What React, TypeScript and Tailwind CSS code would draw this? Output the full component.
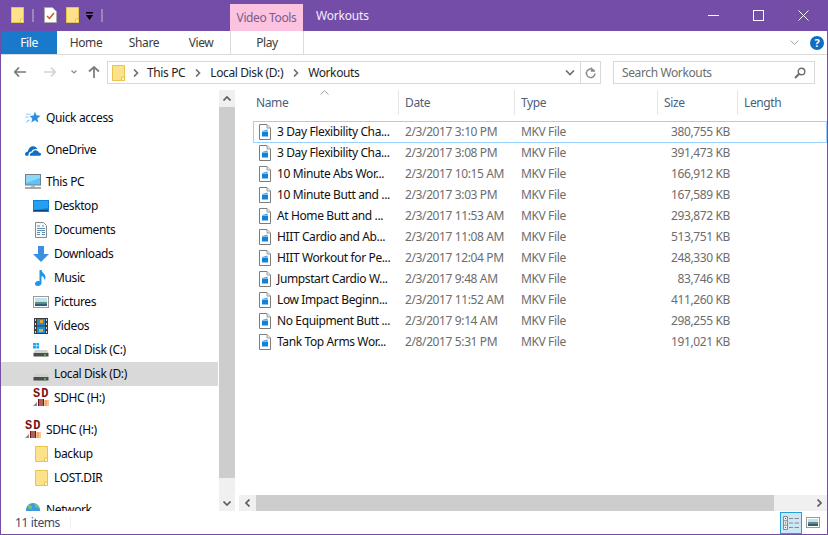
import React from "react";

const Folder = ({ className = "" }: { className?: string }) => (
  <svg width="13" height="16" viewBox="0 0 13 16" className={className}>
    <path d="M.5.5h12v15H.5z" fill="#fde38a" stroke="#e9c34f" />
    <path d="M1 1h11v14H1z" fill="#fde28c" />
    <path d="M9.500 15.500v-3.500h3v3.500z" fill="#fff3c4" stroke="#e9c34f" />
  </svg>
);

const Chevron = () => (
  <svg width="6" height="8" viewBox="0 0 6 8" className="shrink-0">
    <path d="M1 0.5 4.500 4 1 7.500" fill="none" stroke="#6d6d6d" strokeWidth="1.600" />
  </svg>
);

const FileIcon = () => (
  <svg width="12" height="16" viewBox="0 0 12 16" className="shrink-0">
    <path d="M.5.5h7.500l3.500 3.500v11.500H.5z" fill="#fff" stroke="#7c7c7c" />
    <path d="M8 .5v3.500h3.500" fill="#eee" stroke="#9a9a9a" />
    <path d="M3 7l5.500-1.500V7H3z" fill="#4aa3ea" />
    <rect x="3" y="7.500" width="6" height="5" fill="#0f83dc" />
  </svg>
);

const Star = () => (
  <svg width="17" height="16" viewBox="0 0 17 16">
    <path d="M10.500 1l1.600 4.200 4.400.3-3.400 2.900 1.100 4.400-3.700-2.400-3.800 2.400 1.100-4.400-2.900-2.600 4.300-.5z" fill="#2b8fe0" />
    <path d="M1 4h5M0 7h4M2 10.500h3M1 13l3-2" stroke="#8cc6f2" strokeWidth="1" />
  </svg>
);
const Cloud = () => (
  <svg width="17" height="11" viewBox="0 0 17 11">
    <path d="M0 9.500C0 7.600 1.500 6.500 3 6.500 3.800 3 6 1 8.700 1c2 0 3.500 1 4.300 3-2.500-.5-5.500.5-6.500 3C5 6.500 4 7.500 3.500 11H1.500C.5 11 0 10.300 0 9.500z" fill="#0f6fc6" />
    <path d="M5 11c.2-2.500 1.700-3.500 3-3.500C9 5.500 11 5 12.500 5.500c1.500.5 2 1.500 2.200 2 1.300 0 2.300.9 2.300 1.900 0 1-.7 1.600-1.700 1.600z" fill="#0f6fc6" />
  </svg>
);
const Monitor = () => (
  <svg width="16" height="16" viewBox="0 0 16 16">
    <rect x=".5" y=".5" width="15" height="10.500" fill="#5fc1f5" stroke="#6f7f8c" />
    <path d="M1 1h14v3L1 9z" fill="#8fd8fa" />
    <rect x="6" y="11" width="4" height="2" fill="#b5b5b5" />
    <rect x="0" y="13" width="16" height="2" fill="#a9a9a9" />
  </svg>
);
const Desktop = () => (
  <svg width="16" height="12" viewBox="0 0 16 12">
    <rect width="16" height="12" fill="#0f7fdc" />
    <path d="M1 1h14v7L1 10z" fill="#23a0f2" />
    <rect x="1" y="10" width="14" height="1" fill="#0a3f78" />
  </svg>
);
const Docs = () => (
  <svg width="12" height="16" viewBox="0 0 12 16">
    <path d="M.5.500h8l3 3v12H.5z" fill="#f8f8f8" stroke="#8a8a8a" />
    <path d="M2 4h3M7 4h2M2 6.500h8M2 8.500h8M2 10.500h3M7 10.500h3M2 12.500h3M7 12.500h3" stroke="#5f8fb5" />
  </svg>
);
const Down = () => (
  <svg width="16" height="16" viewBox="0 0 16 16">
    <path d="M5 0h6v8h5l-8 8-8-8h5z" fill="#3a90e0" />
  </svg>
);
const Music = () => (
  <svg width="12" height="16" viewBox="0 0 12 16">
    <path d="M4.500 0h2c.5 3 4 3.500 4 7.500 0 1-.3 2-1 2.500.2-2-1.300-3.500-3-4V13c0 1.800-1.700 3-3.500 3C1.200 16 0 15 0 13.700c0-1.500 1.500-2.700 3.200-2.700.5 0 1 .1 1.300.3z" fill="#1e96ec" />
  </svg>
);
const Pictures = () => (
  <svg width="16" height="12" viewBox="0 0 16 12">
    <rect x=".5" y=".5" width="15" height="11" fill="#fff" stroke="#9a9a9a" />
    <rect x="2" y="2" width="12" height="4" fill="#bfe3f4" />
    <rect x="2" y="6" width="12" height="2" fill="#5f8f7c" />
    <rect x="2" y="8" width="12" height="2" fill="#2f5f78" />
  </svg>
);
const Videos = () => (
  <svg width="14" height="16" viewBox="0 0 14 16">
    <rect width="14" height="16" fill="#3b3b3b" />
    <path d="M1 1h1v2H1zM1 5h1v2H1zM1 9h1v2H1zM1 13h1v2H1zM12 1h1v2h-1zM12 5h1v2h-1zM12 9h1v2h-1zM12 13h1v2h-1z" fill="#ddd" />
    <rect x="3" y="1" width="8" height="6.500" fill="#2e88c9" />
    <rect x="6" y="2" width="3" height="3" fill="#e2a72c" />
    <rect x="3" y="8.500" width="8" height="6.500" fill="#1d8fd6" />
    <rect x="5" y="11" width="4" height="3" fill="#d9b03a" />
  </svg>
);
const Disk = ({ win = false }: { win?: boolean }) => (
  <svg width="16" height="14" viewBox="0 0 16 14">
    {win && <path d="M0 0h3v2.500H0zM3.500 0H6v2.500H3.500zM0 3h3v2.500H0zM3.500 3H6v2.500H3.500z" fill="#1ca7ee" />}
    <path d="M2 7h12l1.500 3H.5z" fill="#cfcfcf" />
    <rect x=".5" y="10" width="15" height="3.500" fill="#4d4d4d" />
    <rect x="11" y="11" width="2" height="1.500" fill="#38d04a" />
  </svg>
);
const Sd = () => (
  <span className="relative block w-[16px] h-[18px]">
    <span className="absolute left-0 top-0 text-[12px] leading-[10px] font-bold text-[#7d1010] [font-family:'Liberation_Mono',monospace] tracking-[1px]">SD</span>
    <svg width="16" height="18" viewBox="0 0 16 18" className="absolute left-0 top-0">
      <rect x="5" y="10" width="6" height="7" fill="#7d1010" />
      <path d="M7 10v7M9 10v7" stroke="#d5b5a5" />
      <path d="M11 12h5M11 14h5M11 16h5M13 11v6" stroke="#f08a30" />
      <path d="M0 17l4-4v4z" fill="#8a8a8a" />
    </svg>
  </span>
);
const Globe = () => (
  <svg width="17" height="17" viewBox="0 0 17 17">
    <circle cx="8.500" cy="8" r="7.500" fill="#3d9be0" />
    <path d="M3 3c3-1 5 1 4 3S3 7 3 3zM10 1c3 1 5 3 5 5l-4-1z" fill="#7cc36c" />
  </svg>
);

const nav: { label: string; icon: React.ReactNode; sub?: boolean; gap?: boolean; sel?: boolean }[] = [
  { label: "Quick access", icon: <Star /> },
  { label: "OneDrive", icon: <Cloud />, gap: true },
  { label: "This PC", icon: <Monitor />, gap: true },
  { label: "Desktop", icon: <Desktop />, sub: true },
  { label: "Documents", icon: <Docs />, sub: true },
  { label: "Downloads", icon: <Down />, sub: true },
  { label: "Music", icon: <Music />, sub: true },
  { label: "Pictures", icon: <Pictures />, sub: true },
  { label: "Videos", icon: <Videos />, sub: true },
  { label: "Local Disk (C:)", icon: <Disk win />, sub: true },
  { label: "Local Disk (D:)", icon: <Disk />, sub: true, sel: true },
  { label: "SDHC (H:)", icon: <Sd />, sub: true },
  { label: "SDHC (H:)", icon: <Sd />, gap: true },
  { label: "backup", icon: <Folder />, sub: true },
  { label: "LOST.DIR", icon: <Folder />, sub: true },
  { label: "Network", icon: <Globe />, gap: true },
];

const files = [
  ["3 Day Flexibility Cha...", "2/3/2017 3:10 PM", "380,755 KB"],
  ["3 Day Flexibility Cha...", "2/3/2017 3:08 PM", "391,473 KB"],
  ["10 Minute Abs Wor...", "2/3/2017 10:15 AM", "166,912 KB"],
  ["10 Minute Butt and ...", "2/3/2017 3:03 PM", "167,589 KB"],
  ["At Home Butt and ...", "2/3/2017 11:53 AM", "293,872 KB"],
  ["HIIT Cardio and Ab...", "2/3/2017 11:08 AM", "513,751 KB"],
  ["HIIT Workout for Pe...", "2/3/2017 12:04 PM", "248,330 KB"],
  ["Jumpstart Cardio W...", "2/3/2017 9:48 AM", "83,746 KB"],
  ["Low Impact Beginn...", "2/3/2017 11:52 AM", "411,260 KB"],
  ["No Equipment Butt ...", "2/3/2017 9:14 AM", "298,255 KB"],
  ["Tank Top Arms Wor...", "2/8/2017 5:31 PM", "191,021 KB"],
];

const columns = [
  { label: "Name", w: "w-[160px]", pl: "pl-[17px]" },
  { label: "Date", w: "w-[116px]", pl: "pl-[6px]" },
  { label: "Type", w: "w-[143px]", pl: "pl-[6px]" },
  { label: "Size", w: "w-[80px]", pl: "pl-[6px]" },
  { label: "Length", w: "w-[80px]", pl: "pl-[6px]" },
];

export default function App() {
  return (
    <div className="w-[828px] h-[535px] overflow-hidden bg-[#744da9] pl-px pr-px pb-px flex flex-col text-[12px] leading-[16px] text-black [font-family:'Noto_Sans',sans-serif] tracking-[-0.38px]">
      {/* Title bar */}
      <div className="h-[31px] shrink-0 flex items-start text-white relative">
        <div className="w-[229px] shrink-0 flex items-center pt-[7px] pl-[10px]">
          <Folder />
          <div className="ml-[8px] w-[2px] h-[13px] bg-[#9c86bf]" />
          <svg width="13" height="16" viewBox="0 0 13 16" className="ml-[10px]">
            <path d="M.5.500h8l4 4v11H.5z" fill="#fff" stroke="#aaa" />
            <path d="M3 9l2.500 2.500L10 6" fill="none" stroke="#d9541e" strokeWidth="1.500" />
          </svg>
          <Folder className="ml-[9px]" />
          <svg width="7" height="8" viewBox="0 0 7 8" className="ml-[7px] mt-[2px]">
            <path d="M0 0h7v1.500H0zM0 3h7L3.500 8z" fill="#000" />
          </svg>
          <div className="ml-[8px] w-[2px] h-[13px] bg-[#9c86bf]" />
        </div>
        <div className="w-[73px] h-[27px] mt-[4px] shrink-0 bg-[#fbc3df] flex items-center justify-center text-[#7c5a8c] pt-[1px]">Video Tools</div>
        <div className="ml-[13px] mt-[8px] text-[#f3eef9] text-[12px] tracking-[-0.2px]">Workouts</div>
        <div className="ml-auto flex items-center pt-[10px] pr-[18px] gap-[34px]">
          <div className="w-[11px] h-[10px] flex items-center"><div className="w-[11px] h-px bg-white" /></div>
          <div className="w-[11px] h-[11px] border border-white" />
          <svg width="11" height="11" viewBox="0 0 11 11">
            <path d="M.5.500l10 10M10.500.500l-10 10" stroke="#fff" strokeWidth="1" />
          </svg>
        </div>
      </div>

      <div className="flex-1 min-h-0 bg-white flex flex-col">
        {/* Ribbon tabs */}
        <div className="h-[24px] shrink-0 flex items-stretch border-b border-[#dadbdc] text-[#3b3b3b]">
          <div className="w-[56px] h-[23px] bg-[#1979ca] text-white flex items-center justify-center">File</div>
          <div className="w-[58px] flex items-center justify-center">Home</div>
          <div className="w-[58px] flex items-center justify-center">Share</div>
          <div className="w-[56px] flex items-center justify-center">View</div>
          <div className="w-[74px] ml-px flex items-center justify-center border-x border-[#dadbdc]">Play</div>
          <div className="ml-auto flex items-center pr-[3px] gap-[11px]">
            <svg width="9" height="6" viewBox="0 0 9 6"><path d="M.5.500 4.500 4.500 8.500.500" fill="none" stroke="#a8a8a8" /></svg>
            <div className="w-[14px] h-[14px] rounded-full bg-[#0f6cc0] text-white font-bold text-[11px] leading-[14px] text-center">?</div>
          </div>
        </div>

        {/* Address row */}
        <div className="h-[35px] shrink-0 flex pt-[6px]">
          <div className="w-[106px] shrink-0 flex items-center h-[22px] pl-[13px]">
            <svg width="12" height="10" viewBox="0 0 12 10"><path d="M5 .5.800 5 5 9.500M1 5h11" fill="none" stroke="#7a7a7a" strokeWidth="1.700" /></svg>
            <svg width="12" height="10" viewBox="0 0 12 10" className="ml-[18px]"><path d="M7 .5 11.200 5 7 9.500M0 5h11" fill="none" stroke="#d4d4d4" strokeWidth="1.700" /></svg>
            <svg width="6" height="4" viewBox="0 0 6 4" className="ml-[15px]"><path d="M.5.500 3 3 5.500.500" fill="none" stroke="#8a8a8a" strokeWidth="1.200" /></svg>
            <svg width="12" height="12" viewBox="0 0 12 12" className="ml-[11px]"><path d="M1 5.500 6 1l5 4.500M6 1.500V12" fill="none" stroke="#7a7a7a" strokeWidth="1.700" /></svg>
          </div>
          <div className="w-[474px] h-[23px] shrink-0 border border-[#d9d9d9] flex items-center pl-[4px] text-[#1e1e1e]">
            <Folder />
            <span className="ml-[8px]"><Chevron /></span>
            <span className="ml-[8px]">This PC</span>
            <span className="ml-[10px]"><Chevron /></span>
            <span className="ml-[9px]">Local Disk (D:)</span>
            <span className="ml-[10px]"><Chevron /></span>
            <span className="ml-[9px]">Workouts</span>
            <svg width="10" height="6" viewBox="0 0 10 6" className="ml-auto mr-[5px]"><path d="M1 .5 5 4.500 9 .5" fill="none" stroke="#6d6d6d" strokeWidth="1.600" /></svg>
          </div>
          <div className="w-[20px] h-[23px] shrink-0 border-y border-r border-[#d9d9d9] flex items-center justify-center">
            <svg width="11" height="12" viewBox="0 0 11 12"><path d="M9 3.500A4.300 4.300 0 1 0 10 6.500M6.500.5V4H10" fill="none" stroke="#8a8a8a" strokeWidth="1.500" /></svg>
          </div>
          <div className="ml-[12px] w-[202px] h-[23px] shrink-0 border border-[#d9d9d9] flex items-center pl-[8px] pr-[8px] text-[#6d6d6d]">
            Search Workouts
            <svg width="12" height="12" viewBox="0 0 12 12" className="ml-auto"><circle cx="7.500" cy="4.500" r="3.300" fill="none" stroke="#6d6d6d" strokeWidth="1.400" /><path d="M5 7 1 11" stroke="#6d6d6d" strokeWidth="2" /></svg>
          </div>
        </div>

        {/* Body */}
        <div className="flex-1 min-h-0 flex">
          {/* Navigation */}
          <div className="w-[217px] shrink-0 overflow-hidden pt-[16px]">
            {nav.map((n, i) => (
              <div
                key={i}
                className={`h-[24px] flex items-center ${n.gap ? "mt-[8px]" : ""} ${n.sel ? "bg-[#d9d9d9]" : ""} text-[#0a0a14]`}
              >
                <span className={`${n.sub ? "ml-[32px]" : "ml-[24px]"} w-[16px] mr-[5px] flex justify-center shrink-0`}>{n.icon}</span>
                {n.label}
              </div>
            ))}
          </div>
          {/* Nav scrollbar */}
          <div className="w-[16px] shrink-0 ml-px bg-[#f0f0f0] flex flex-col">
            <div className="h-[17px] flex items-center justify-center">
              <svg width="8" height="5" viewBox="0 0 8 5"><path d="M.5 4.500 4 1l3.500 3.500" fill="none" stroke="#606060" strokeWidth="1.700" /></svg>
            </div>
            <div className="h-[371px] bg-[#cdcdcd]" />
            <div className="flex-1 flex items-end justify-center pb-[5px]">
              <svg width="8" height="5" viewBox="0 0 8 5"><path d="M.5.500 4 4l3.500-3.500" fill="none" stroke="#606060" strokeWidth="1.700" /></svg>
            </div>
          </div>

          {/* File list */}
          <div className="flex-1 min-w-0 ml-[4px] flex flex-col">
            <div className="flex-1 min-h-0 relative">
              <svg width="9" height="5" viewBox="0 0 9 5" className="absolute left-[81px] top-[0px]"><path d="M.5 4.500 4.500.7l4 3.800" fill="none" stroke="#a0a0a0" /></svg>
              <div className="h-[25px] flex text-[#4c607a]">
                {columns.map((c, i) => (
                  <div key={c.label} className={`${c.w} ${c.pl} ${i < 4 ? "border-r border-[#e5e5e5]" : ""} flex items-center shrink-0`}>{c.label}</div>
                ))}
              </div>
              <div className="pt-[6px] pl-[14px] text-[#6d6d6d]">
                {files.map((f, i) => (
                  <div key={i} className={`flex items-center ${i === 0 ? "h-[22px] mb-[-1px] border border-[#99d1ff] relative" : "h-[21px] border border-transparent"}`}>
                    <span className="ml-[5px] mr-[6px] flex"><FileIcon /></span>
                    <span className="w-[128px] shrink-0 text-[#111]">{f[0]}</span>
                    <span className="w-[116px] shrink-0">{f[1]}</span>
                    <span className="w-[143px] shrink-0">MKV File</span>
                    <span className="w-[66px] shrink-0 text-right">{f[2]}</span>
                  </div>
                ))}
              </div>
            </div>
            {/* Horizontal scrollbar */}
            <div className="h-[16px] shrink-0 bg-[#f0f0f0] flex items-center">
              <div className="w-[17px] flex justify-center">
                <svg width="5" height="8" viewBox="0 0 5 8"><path d="M4.500.5 1 4l3.500 3.500" fill="none" stroke="#606060" strokeWidth="1.700" /></svg>
              </div>
              <div className="w-[518px] h-full bg-[#cdcdcd]" />
              <div className="flex-1 flex justify-end pr-[5px]">
                <svg width="5" height="8" viewBox="0 0 5 8"><path d="M.5.5 4 4 .5 7.500" fill="none" stroke="#606060" strokeWidth="1.700" /></svg>
              </div>
            </div>
          </div>
        </div>

        {/* Status bar */}
        <div className="h-[23px] shrink-0 flex items-center pl-[14px] text-[#3b4a6b]">
          <span>11 items</span>
          <div className="ml-[10px] w-px h-[12px] bg-[#eeeeee]" />
          <div className="ml-auto flex items-center pr-[7px] gap-[4px]">
            <div className="w-[22px] h-[22px] bg-[#cce8f7] border border-[#26a0da] flex items-center justify-center">
              <svg width="16" height="14" viewBox="0 0 16 14">
                <path d="M.5.500h4v13h-4zM.5 4.800h4M.5 9.200h4" fill="#eee" stroke="#8a8a8a" />
                <rect x="2" y="2" width="1" height="1" fill="#555" />
                <rect x="2" y="6.500" width="1" height="1" fill="#555" />
                <rect x="2" y="11" width="1" height="1" fill="#d33" />
                <path d="M6 2.500h4M11.500 2.500H16M6 7h4M11.500 7H16M6 11.500h4M11.500 11.500H16" stroke="#8a8a8a" />
              </svg>
            </div>
            <svg width="14" height="11" viewBox="0 0 14 11">
              <rect x=".5" y=".5" width="13" height="10" fill="#fff" stroke="#9a9a9a" />
              <rect x="2" y="2" width="10" height="3" fill="#bfe3f4" />
              <rect x="2" y="5" width="10" height="2" fill="#5f8f7c" />
              <rect x="2" y="7" width="10" height="2" fill="#2f5f78" />
            </svg>
          </div>
        </div>
      </div>
    </div>
  );
}
